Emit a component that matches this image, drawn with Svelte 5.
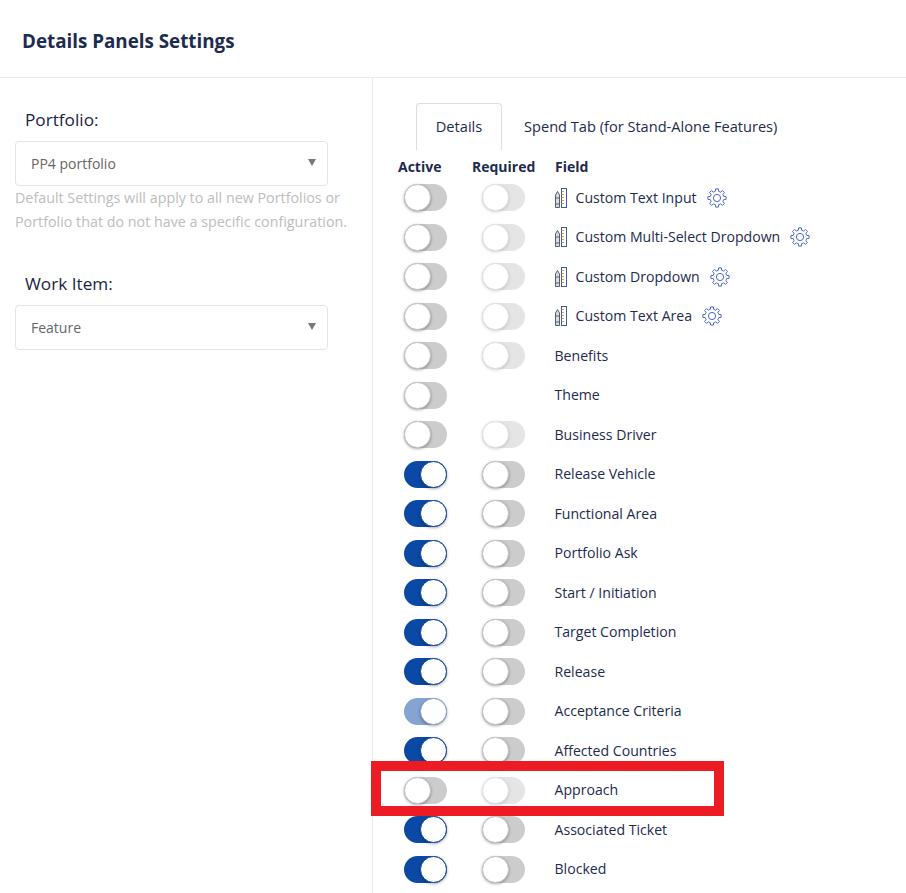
<script lang="ts">
  type Row = { name: string; active: 'on' | 'off' | 'faded'; required: 'on' | 'off' | 'muted' | null; custom?: boolean };

  const rows: Row[] = [
    { name: 'Custom Text Input', active: 'off', required: 'muted', custom: true },
    { name: 'Custom Multi-Select Dropdown', active: 'off', required: 'muted', custom: true },
    { name: 'Custom Dropdown', active: 'off', required: 'muted', custom: true },
    { name: 'Custom Text Area', active: 'off', required: 'muted', custom: true },
    { name: 'Benefits', active: 'off', required: 'muted' },
    { name: 'Theme', active: 'off', required: null },
    { name: 'Business Driver', active: 'off', required: 'muted' },
    { name: 'Release Vehicle', active: 'on', required: 'off' },
    { name: 'Functional Area', active: 'on', required: 'off' },
    { name: 'Portfolio Ask', active: 'on', required: 'off' },
    { name: 'Start / Initiation', active: 'on', required: 'off' },
    { name: 'Target Completion', active: 'on', required: 'off' },
    { name: 'Release', active: 'on', required: 'off' },
    { name: 'Acceptance Criteria', active: 'faded', required: 'off' },
    { name: 'Affected Countries', active: 'on', required: 'off' },
    { name: 'Approach', active: 'off', required: 'muted' },
    { name: 'Associated Ticket', active: 'on', required: 'off' },
    { name: 'Blocked', active: 'on', required: 'off' }
  ];

  // 8 tooth gear outline around (10,10)
  function gearPath() {
    const pts: string[] = [];
    const teeth = 8;
    for (let i = 0; i < teeth; i++) {
      const a = (i / teeth) * Math.PI * 2;
      const offs: [number, number][] = [[-0.24, 6.9], [-0.15, 9.2], [0.15, 9.2], [0.24, 6.9]];
      for (const [d, r] of offs) {
        pts.push(`${(10 + Math.sin(a + d) * r).toFixed(2)} ${(10 - Math.cos(a + d) * r).toFixed(2)}`);
      }
    }
    return 'M' + pts.join('L') + 'Z';
  }
  const gear = gearPath();
</script>

<div class="page">
  <header class="top">
    <h1>Details Panels Settings</h1>
  </header>

  <div class="body">
    <aside class="side">
      <label class="lbl" for="pf">Portfolio:</label>
      <div class="select" id="pf"><span>PP4 portfolio</span><i class="caret"></i></div>
      <p class="help">Default Settings will apply to all new Portfolios or Portfolio that do not have a specific configuration.</p>

      <label class="lbl second" for="wi">Work Item:</label>
      <div class="select" id="wi"><span>Feature</span><i class="caret"></i></div>
    </aside>

    <main class="content">
      <nav class="tabs">
        <span class="tab active">Details</span>
        <span class="tab">Spend Tab (for Stand-Alone Features)</span>
      </nav>

      <div class="grid head">
        <span>Active</span>
        <span>Required</span>
        <span>Field</span>
      </div>

      {#each rows as row}
        <div class="grid row">
          <span class="toggle {row.active}"><i></i></span>
          {#if row.required}
            <span class="toggle {row.required}"><i></i></span>
          {:else}
            <span></span>
          {/if}
          <span class="field">
            {#if row.custom}
              <svg class="ruler" width="12" height="20" viewBox="0 0 12 20" fill="none" stroke-width="1">
                <path d="M.5 7 2.5 3.5 4.5 7V19.5H.5Z" fill="#e6dcc0" stroke="#4a5f8f" />
                <path d="M.5 10H4.5M.5 16H4.5" stroke="#4a5f8f" />
                <rect x="6.5" y="0.5" width="5" height="19" stroke="#3f5c94" />
                <path d="M6.5 3.5H9M6.5 6.5H9M6.5 9.5H9M6.5 12.5H9M6.5 15.5H9" stroke="#c49a6c" />
              </svg>
            {/if}
            <span>{row.name}</span>
            {#if row.custom}
              <svg class="gear" width="20" height="20" viewBox="0 0 20 20" fill="none" stroke="#4d68c4" stroke-width="1">
                <path d={gear} />
                <circle cx="10" cy="10" r="3.6" />
              </svg>
            {/if}
          </span>
        </div>
      {/each}
    </main>
  </div>

  <div class="highlight"></div>
</div>

<style>
  :global(body) {
    margin: 0;
    background: #fff;
  }
  .page {
    position: relative;
    height: 893px;
    overflow: hidden;
    color: #1d2b4f;
    font-family: "Open Sans", "Noto Sans", sans-serif;
    font-size: 14px;
  }
  .top {
    box-sizing: border-box;
    height: 78px;
    padding: 29px 22px 0;
    border-bottom: 1px solid #e9e9e9;
  }
  h1 {
    margin: 0;
    font-size: 18.8px;
    line-height: 25px;
    font-weight: 700;
  }
  .body {
    display: flex;
    height: 815px;
  }
  .side {
    box-sizing: border-box;
    width: 373px;
    padding: 30px 15px 0;
    border-right: 1px solid #e9e9e9;
  }
  .lbl {
    display: block;
    padding-left: 10px;
    font-size: 17.2px;
    line-height: 24px;
    font-weight: 500;
    color: #1a2542;
  }
  .lbl.second {
    margin-top: 38px;
  }
  .select {
    box-sizing: border-box;
    display: flex;
    align-items: center;
    justify-content: space-between;
    width: 313px;
    height: 45px;
    margin-top: 9px;
    padding: 0 11px 1px 15px;
    border: 1px solid #e4e4e4;
    border-radius: 4px;
    color: #666;
    font-size: 14px;
  }
  .caret {
    width: 0;
    height: 0;
    margin-bottom: 2px;
    border-left: 4.5px solid transparent;
    border-right: 4.5px solid transparent;
    border-top: 7px solid #777;
  }
  .help {
    margin: 0;
    width: 345px;
    font-size: 14.3px;
    line-height: 24px;
    color: #bdbdbd;
  }
  .content {
    flex: 1;
    padding: 25px 0 0 25px;
  }
  .tabs {
    display: flex;
    height: 47px;
    margin-left: 18px;
  }
  .tab {
    box-sizing: border-box;
    padding: 10px 21px 0;
    font-size: 14.6px;
    line-height: 24px;
    border: 1px solid transparent;
    border-bottom: none;
  }
  .tab.active {
    width: 86px;
    padding: 10px 0 0;
    text-align: center;
    border-color: #dedede;
    border-radius: 4px 4px 0 0;
  }
  .grid {
    display: grid;
    grid-template-columns: 74px 83px 1fr;
    align-items: center;
  }
  .head {
    height: 24px;
    margin-top: 4px;
    font-weight: 700;
    font-size: 14px;
  }
  .row {
    height: 39.5px;
  }
  .row .toggle {
    margin-left: 6px;
  }
  .row:nth-child(n) .toggle:nth-child(2) {
    margin-left: 10px;
  }
  .toggle {
    position: relative;
    display: block;
    width: 43px;
    height: 27px;
    border-radius: 14px;
    background: #cccccc;
  }
  .toggle i {
    position: absolute;
    top: 0;
    left: 0;
    box-sizing: border-box;
    width: 27px;
    height: 27px;
    border-radius: 50%;
    background: #fff;
    border: 1px solid #c4c4c4;
    box-shadow: 0 1px 3px rgba(0, 0, 0, 0.35);
  }
  .toggle.muted {
    opacity: 0.5;
  }
  .toggle.on {
    background: #0b49a5;
  }
  .toggle.faded {
    background: #86a4d2;
  }
  .toggle.on i,
  .toggle.faded i {
    left: 16px;
    border-color: #0b49a5;
  }
  .toggle.faded i {
    border-color: #86a4d2;
  }
  .field {
    display: flex;
    align-items: center;
    line-height: 24px;
    font-size: 14.1px;
    margin-left: -0.5px;
  }
  .ruler {
    margin-right: 9px;
    flex: none;
  }
  .gear {
    margin-left: 10px;
    flex: none;
  }
  .highlight {
    position: absolute;
    left: 371px;
    top: 761px;
    box-sizing: border-box;
    width: 353px;
    height: 55px;
    border: 10px solid #ed1c24;
  }
</style>
